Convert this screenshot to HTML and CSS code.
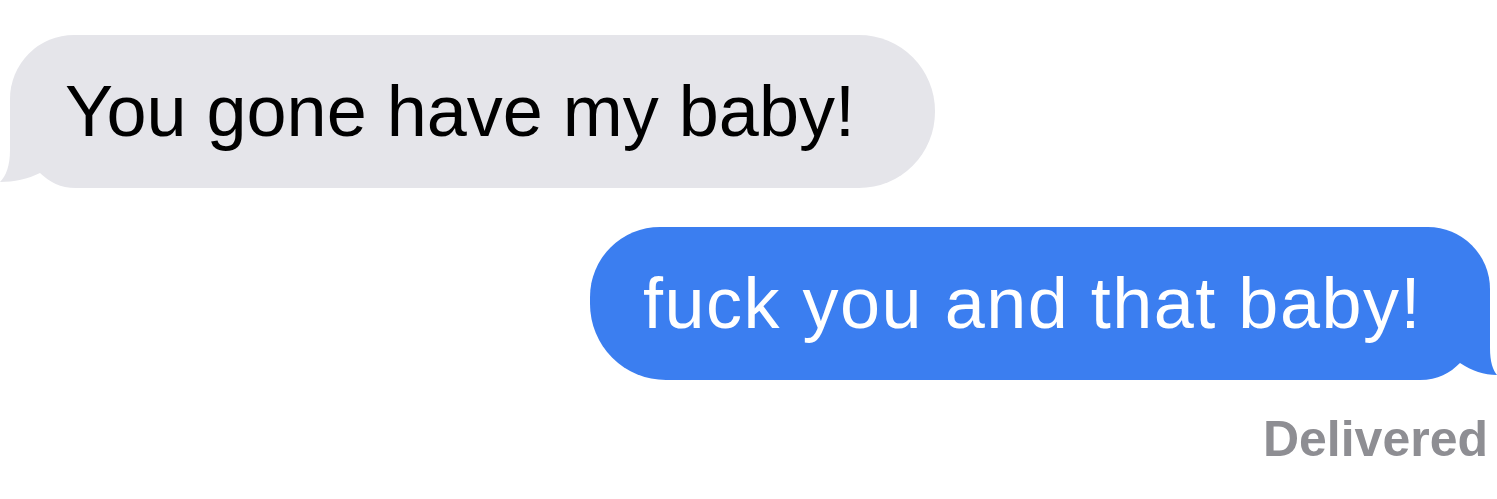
FILE: index.html
```html
<!DOCTYPE html>
<html>
<head lang="en">
    <meta charset="UTF-8">
    <title>Messages</title>
    <link rel="stylesheet" href="styles.css">
</head>
<body>
<div class="thread">
    <div class="bubble received">
        You gone have my baby!
        <svg class="tail" width="76" height="60" viewBox="0 0 76 60">
            <rect width="76" height="60" fill="#fff"/>
            <path d="M10 0 L10 22 C10 38 6 48 0 54 C14 54 28 51 40 45 C50 54 60 60 76 60 L76 0 Z" fill="#e5e5ea"/>
        </svg>
    </div>

    <div class="bubble sent">
        fuck you and that baby!
        <svg class="tail" width="77" height="60" viewBox="0 0 77 60">
            <rect width="77" height="60" fill="#fff"/>
            <path d="M70 0 L70 28 C70 42 73 50 77 55 C64 55 52 51 40 43 C30 53 18 60 0 60 L0 0 Z" fill="#3b7ef0"/>
        </svg>
    </div>

    <p class="status">Delivered</p>
</div>
</body>
</html>
```

FILE: styles.css
```css
html, body, div, p {
    padding: 0;
    margin: 0;
    border: none;
}

body {
    background: #fff;
    font-family: 'Liberation Sans', Arial, sans-serif;
}

.thread {
    display: flex;
    flex-direction: column;
    padding: 35px 7px 0 10px;
}

.bubble {
    position: relative;
    box-sizing: border-box;
    height: 153px;
    font-size: 72px;
    line-height: 153px;
    white-space: nowrap;
}

.bubble.received {
    align-self: flex-start;
    width: 925px;
    padding-left: 55px;
    border-radius: 64px 76px 76px 30px;
    background: #e5e5ea;
    color: #000;
}

.bubble.sent {
    align-self: flex-end;
    width: 900px;
    margin-top: 39px;
    padding-left: 53px;
    border-radius: 70px 62px 30px 76px;
    background: #3b7ef0;
    color: #fff;
    letter-spacing: 1.5px;
}

/* tail sits over the bottom corner and redraws it */
.bubble .tail {
    position: absolute;
    bottom: 0;
    display: block;
}

.bubble.received .tail {
    left: -10px;
}

.bubble.sent .tail {
    right: -7px;
}

.status {
    align-self: flex-end;
    margin-top: 30px;
    padding-right: 2px;
    font-size: 50px;
    font-weight: bold;
    color: #8e8e93;
}
```
